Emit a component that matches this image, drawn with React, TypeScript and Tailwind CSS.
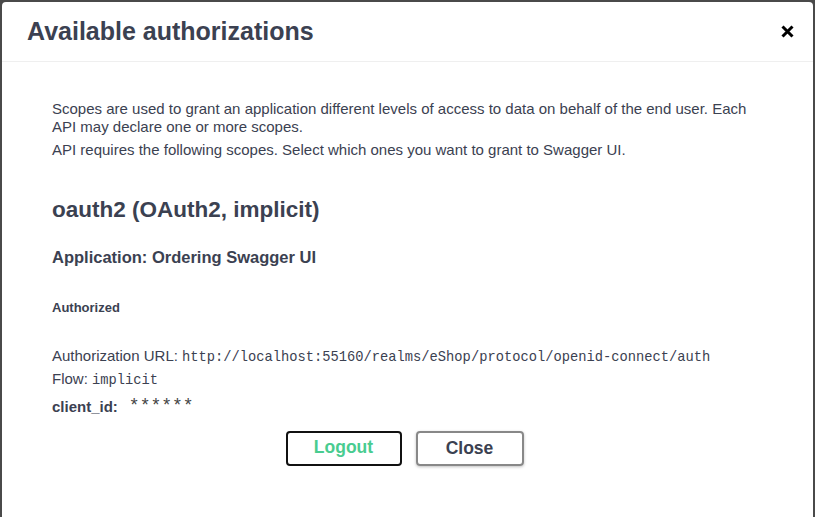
export default function App() {
    const sans = { fontFamily: "'Liberation Sans', Arial, sans-serif" };
    const mono = { fontFamily: "'Liberation Mono', 'DejaVu Sans Mono', monospace" };

    return (
        <div className="h-[517px] overflow-hidden bg-[#4a4a4a] px-[2px] pt-[2px] text-[#3b4151]" style={sans}>
            <div className="h-[560px] rounded-t-[4px] bg-white">
                {/* Header */}
                <div className="flex h-[60px] items-center justify-between border-b border-[#efefef] pl-[25px] pr-[19px]">
                    <h3 className="text-[25px] font-semibold leading-none">Available authorizations</h3>
                    <button className="text-black">
                        <svg width="13" height="13" viewBox="0 0 13 13">
                            <path d="M1.5 1.5l10 10M11.5 1.5l-10 10" stroke="currentColor" strokeWidth="3" strokeLinecap="butt" />
                        </svg>
                    </button>
                </div>

                {/* Content */}
                <div className="px-[50px] pt-[38px]">
                    <div className="text-[15px] leading-[18px]">
                        <p>
                            Scopes are used to grant an application different levels of access to data on behalf of the end user. Each API may declare one or more scopes.
                        </p>
                        <p className="mt-[5px]">API requires the following scopes. Select which ones you want to grant to Swagger UI.</p>
                    </div>

                    <h4 className="mt-[37px] text-[22.5px] font-semibold leading-[28px]">oauth2 (OAuth2, implicit)</h4>

                    <h6 className="mt-[23px] text-[16.5px] font-semibold leading-[20px]">Application: Ordering Swagger UI</h6>

                    <h6 className="mt-[33px] text-[13px] font-semibold leading-[16px]">Authorized</h6>

                    <div className="mt-[31px] text-[15px] leading-[18px]">
                        <p>
                            Authorization URL:{" "}
                            <code className="text-[13.75px]" style={mono}>
                                http://localhost:55160/realms/eShop/protocol/openid-connect/auth
                            </code>
                        </p>
                        <p className="mt-[3px]">
                            Flow:{" "}
                            <code className="text-[13.75px]" style={mono}>
                                implicit
                            </code>
                        </p>
                        <div className="mt-[8px] flex items-center">
                            <label className="font-semibold">client_id:</label>
                            <code className="-mt-[3px] ml-[11px] text-[18px] leading-none text-[#444]" style={mono}>
                                ******
                            </code>
                        </div>
                    </div>

                    {/* Buttons */}
                    <div className="mt-[15px] flex justify-center gap-[14px] pr-[6px]">
                        <button className="h-[35px] w-[116px] rounded-[4px] border-2 border-[#111] pb-[2px] text-[17.5px] font-semibold text-[#49cc90]">
                            Logout
                        </button>
                        <button className="h-[35px] w-[108px] rounded-[4px] border-2 border-[#888] pb-[1px] text-[17.5px] font-semibold text-[#3b4151] shadow-[0_1px_3px_rgba(0,0,0,0.25)]">
                            Close
                        </button>
                    </div>
                </div>
            </div>
        </div>
    );
}
